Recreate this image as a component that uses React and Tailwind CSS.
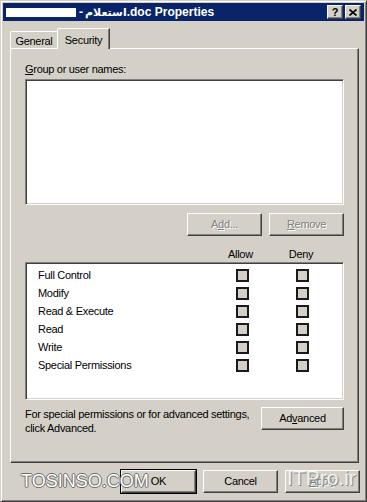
import React from 'react';

const raised =
  'border border-t-white border-l-white border-r-[#404040] border-b-[#404040] shadow-[inset_-1px_-1px_0_#808080,inset_1px_1px_0_#d4d0c8]';
const sunken =
  'border border-t-[#808080] border-l-[#808080] border-r-white border-b-white shadow-[inset_1px_1px_0_#404040,inset_-1px_-1px_0_#d4d0c8]';

const Btn = ({ children, w, disabled, className = '' }) => (
  <div
    className={`${raised} ${className} h-[23px] flex items-center justify-center bg-[#d4d0c8] text-[11px] tracking-[-0.3px] ${
      disabled ? 'text-[#808080] [text-shadow:1px_1px_0_#ffffff]' : 'text-black'
    }`}
    style={{ width: w }}
  >
    {children}
  </div>
);

const Check = () => (
  <div className="w-[13px] h-[13px] border-2 border-[#1a1a1a] bg-[#d4d0c8]" />
);

const perms = ['Full Control', 'Modify', 'Read & Execute', 'Read', 'Write', 'Special Permissions'];

export default function App() {
  return (
    <div
      className="relative w-[367px] h-[502px] bg-[#d4d0c8] overflow-hidden border border-t-[#d4d0c8] border-l-[#d4d0c8] border-r-[#404040] border-b-[#404040] shadow-[inset_1px_1px_0_#ffffff,inset_-1px_-1px_0_#808080]"
      style={{ fontFamily: '"Liberation Sans", Arial, sans-serif' }}
    >
      {/* title bar */}
      <div className="mx-[2px] mt-[2px] h-[18px] bg-[#0a246a] flex items-center pl-[2px] pr-[2px]">
        <div className="flex items-center text-white font-bold text-[12px] leading-none">
          <span className="w-[70px] h-[9px] bg-white ml-[1px]" />
          <span className="ml-[3px] mr-[2px]">-</span>
          <span style={{ fontFamily: '"DejaVu Sans", "Noto Sans", sans-serif' }} className="text-[11px]">
            استعلام
          </span>
          <span>.doc Properties</span>
        </div>
        <div className="ml-auto flex items-center gap-[2px] mr-[1px]">
          <div className={`${raised} w-[16px] h-[14px] bg-[#d4d0c8] flex items-center justify-center text-[11px] font-bold leading-none text-black`}>
            ?
          </div>
          <div className={`${raised} w-[16px] h-[14px] bg-[#d4d0c8] flex items-center justify-center`}>
            <svg width="8" height="7" viewBox="0 0 8 7">
              <path d="M0.5 0.5 L7.5 6.5 M7.5 0.5 L0.5 6.5" stroke="#000" strokeWidth="1.6" />
            </svg>
          </div>
        </div>
      </div>

      {/* tabs */}
      <div className="flex items-end ml-[9px] mt-[7px] h-[20px] text-[11px] tracking-[-0.3px]">
        <div className="h-[17px] w-[48px] border-t border-l border-t-white border-l-white border-r border-r-[#808080] flex items-center justify-center text-black rounded-tl-[2px] pt-[2px]">
          General
        </div>
        <div className="relative z-10 -ml-[1px] h-[21px] w-[53px] border-t border-l border-t-white border-l-white border-r border-r-[#404040] shadow-[inset_-1px_0_0_#808080] bg-[#d4d0c8] flex items-start pt-[3px] justify-center text-black rounded-tl-[2px] -mb-[1px]">
          Security
        </div>
      </div>

      {/* panel */}
      <div className="ml-[9px] w-[349px] h-[415px] border border-t-white border-l-white border-r-[#404040] border-b-[#404040] shadow-[inset_-1px_-1px_0_#808080] px-[14px] pt-[14px] tracking-[-0.3px]">
        <div className="text-[11px] leading-[13px] text-black">
          <span className="underline">G</span>roup or user names:
        </div>
        <div className={`${sunken} mt-[3px] h-[126px] w-[319px] bg-white`} />
        <div className="flex justify-end gap-[7px] mt-[8px] w-[319px]">
          <Btn w={75} disabled>
            A<span className="underline">d</span>d...
          </Btn>
          <Btn w={75} disabled>
            <span className="underline">R</span>emove
          </Btn>
        </div>
        <div className="flex w-[319px] mt-[12px] text-[11px] leading-[13px] text-black">
          <span className="ml-[203px]">Allow</span>
          <span className="ml-[36px]">Deny</span>
        </div>
        <div className={`${sunken} mt-[1px] h-[138px] w-[319px] bg-white pt-[3px]`}>
          {perms.map((p) => (
            <div key={p} className="flex items-center h-[18px] text-[11px] text-black">
              <span className="ml-[12px] w-[198px]">{p}</span>
              <Check />
              <span className="w-[47px]" />
              <Check />
            </div>
          ))}
        </div>
        <div className="flex items-start mt-[7px] w-[319px]">
          <div className="text-[11px] leading-[14px] text-black whitespace-nowrap">
            For special permissions or for advanced settings,
            <br />
            click Advanced.
          </div>
          <Btn w={83} className="ml-auto">
            Ad<span className="underline">v</span>anced
          </Btn>
        </div>
      </div>

      {/* bottom buttons */}
      <div className="flex gap-[7px] ml-[120px] mt-[7px]">
        <Btn w={75} className="outline outline-1 outline-black">OK</Btn>
        <Btn w={75}>Cancel</Btn>
        <Btn w={75} disabled>
          <span className="underline">A</span>pply
        </Btn>
      </div>

      {/* watermarks */}
      <div className="absolute left-[20px] top-[471px] text-[18px] leading-none text-white [text-shadow:1px_0_0_#6b6b6b,-1px_0_0_#6b6b6b,0_1px_0_#6b6b6b,0_-1px_0_#6b6b6b] pointer-events-none">
        TOSINSO.COM
      </div>
      <div className="absolute left-[286px] top-[466px] text-[21px] leading-none text-white/80 [text-shadow:1px_1px_0_#8a8a8a] pointer-events-none">
        ITPro.ir
      </div>
    </div>
  );
}
